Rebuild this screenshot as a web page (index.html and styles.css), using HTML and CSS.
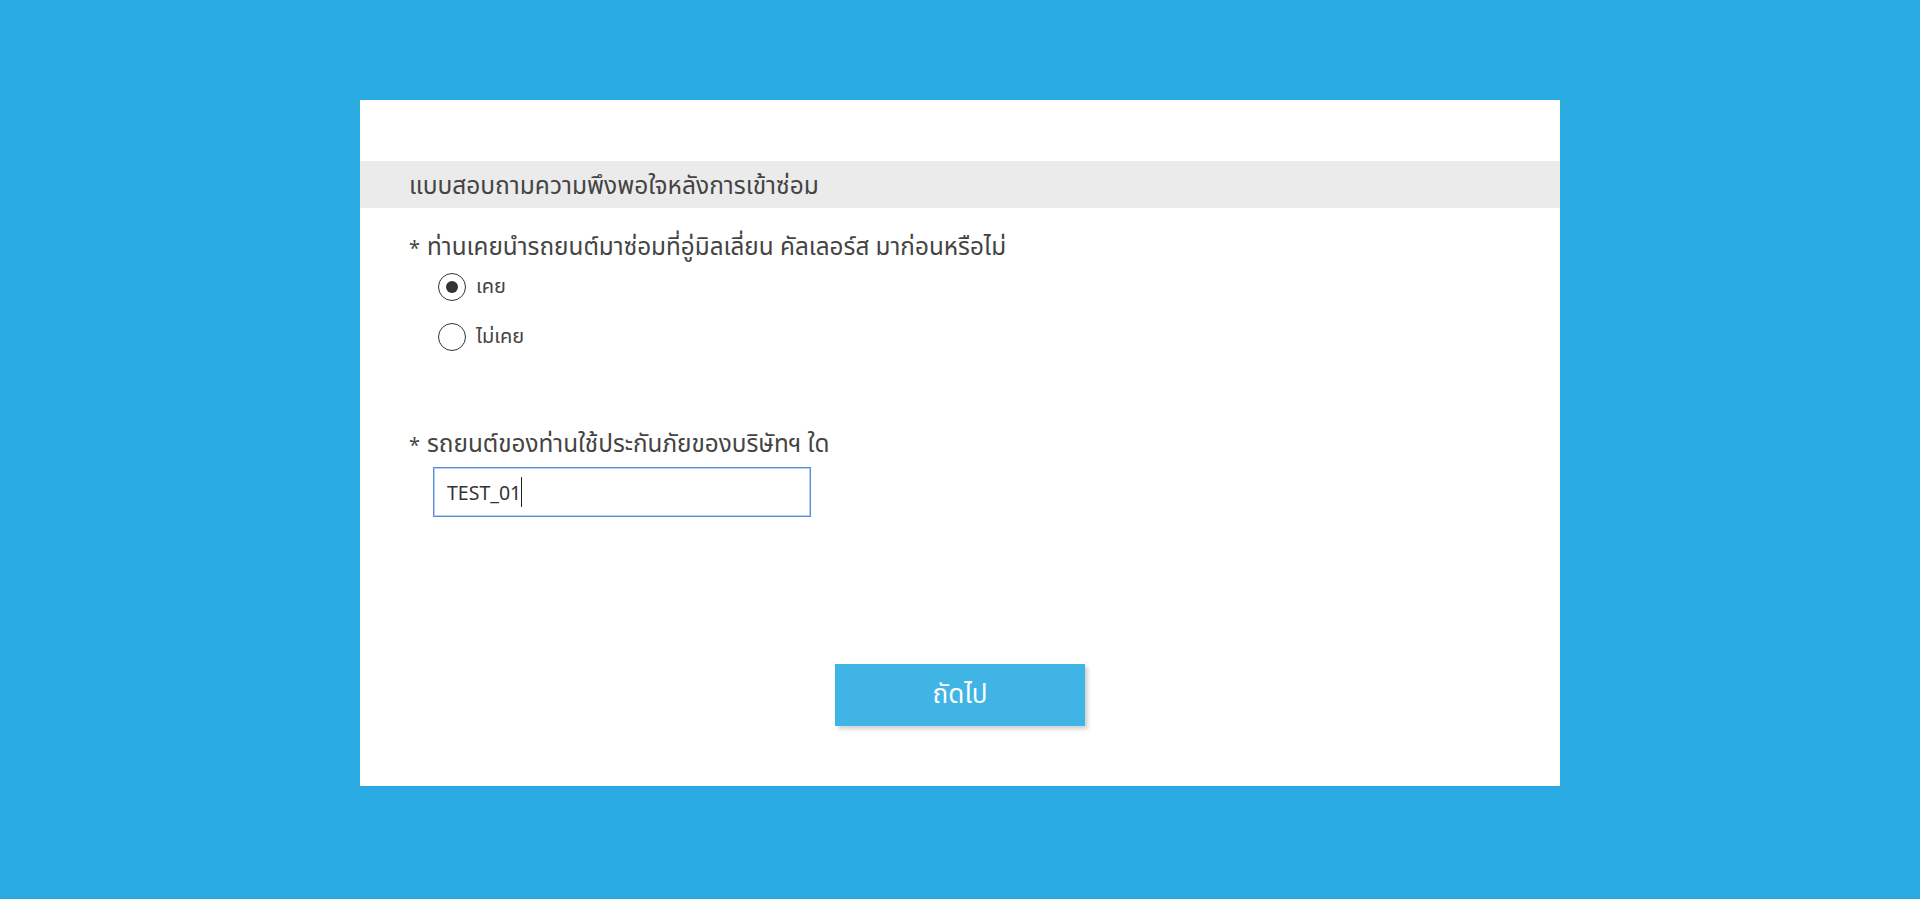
FILE: index.html
```html
<!DOCTYPE html>
<html lang="th">
<head>
<meta charset="utf-8">
<title>แบบสอบถามความพึงพอใจหลังการเข้าซ่อม</title>
<link rel="stylesheet" href="styles.css">
</head>
<body>
<main class="card">
  <h1 class="band">แบบสอบถามความพึงพอใจหลังการเข้าซ่อม</h1>
  <form class="form">
    <p class="question"><span class="req">*</span>ท่านเคยนำรถยนต์มาซ่อมที่อู่มิลเลี่ยน คัลเลอร์ส มาก่อนหรือไม่</p>
    <div class="options">
      <label class="option"><input type="radio" name="q1" class="radio" checked><span>เคย</span></label>
      <label class="option"><input type="radio" name="q1" class="radio"><span>ไม่เคย</span></label>
    </div>
    <p class="question q2"><span class="req">*</span>รถยนต์ของท่านใช้ประกันภัยของบริษัทฯ ใด</p>
    <div class="field"><span class="value">TEST_01</span><span class="caret"></span></div>
    <div class="actions"><button type="button" class="next">ถัดไป</button></div>
  </form>
</main>
</body>
</html>
```
FILE: styles.css
```css
html, body {
  margin: 0;
  padding: 0;
}
body {
  background: #29abe2;
  height: 899px;
  font-family: "Noto Sans", "Noto Sans Thai", "Open Sans", sans-serif;
  color: #444444;
}
.card {
  width: 1200px;
  height: 686px;
  margin: 100px auto 0;
  background: #ffffff;
  box-sizing: border-box;
  padding-top: 61px;
  display: flex;
  flex-direction: column;
}
.band {
  margin: 0;
  height: 47px;
  line-height: 47px;
  background: #ebebeb;
  padding-left: 49px;
  font-size: 24.5px;
  font-weight: normal;
  color: #444444;
  overflow: hidden;
}
.form {
  display: flex;
  flex-direction: column;
  padding-left: 49px;
}
.question {
  margin: 23px 0 0;
  font-size: 24.3px;
  line-height: 30px;
  height: 30px;
}
.req {
  display: inline-block;
  width: 18px;
  font-size: 20px;
}
.q2 {
  margin-top: 71px;
}
.options {
  display: flex;
  flex-direction: column;
  gap: 10px;
  margin-top: 6px;
  padding-left: 29px;
}
.option {
  display: flex;
  align-items: center;
  gap: 10px;
  height: 40px;
  font-size: 20px;
}
.radio {
  appearance: none;
  -webkit-appearance: none;
  margin: 0;
  width: 28px;
  height: 28px;
  border: 1.5px solid #333;
  border-radius: 50%;
  box-sizing: border-box;
  display: flex;
  align-items: center;
  justify-content: center;
  background: #fff;
}
.radio:checked::after {
  content: "";
  width: 12px;
  height: 12px;
  border-radius: 50%;
  background: #333;
}
.field {
  margin: 9px 0 0 24px;
  width: 378px;
  height: 50px;
  box-sizing: border-box;
  border: 1px solid #5b8fdc;
  box-shadow: inset 0 0 0 1px #b5cdf1;
  display: flex;
  align-items: center;
  padding-left: 13px;
  font-size: 19.5px;
  color: #333;
}
.caret {
  display: inline-block;
  width: 1px;
  height: 30px;
  background: #222;
  margin-left: 0;
}
.actions {
  display: flex;
  justify-content: center;
  margin-top: 147px;
  margin-left: -49px;
}
.next {
  width: 250px;
  height: 62px;
  border: none;
  background: #41b4e6;
  color: #fff;
  font-family: inherit;
  font-size: 26px;
  box-shadow: 3px 3px 4px rgba(0, 0, 0, 0.18);
  cursor: pointer;
}
```
